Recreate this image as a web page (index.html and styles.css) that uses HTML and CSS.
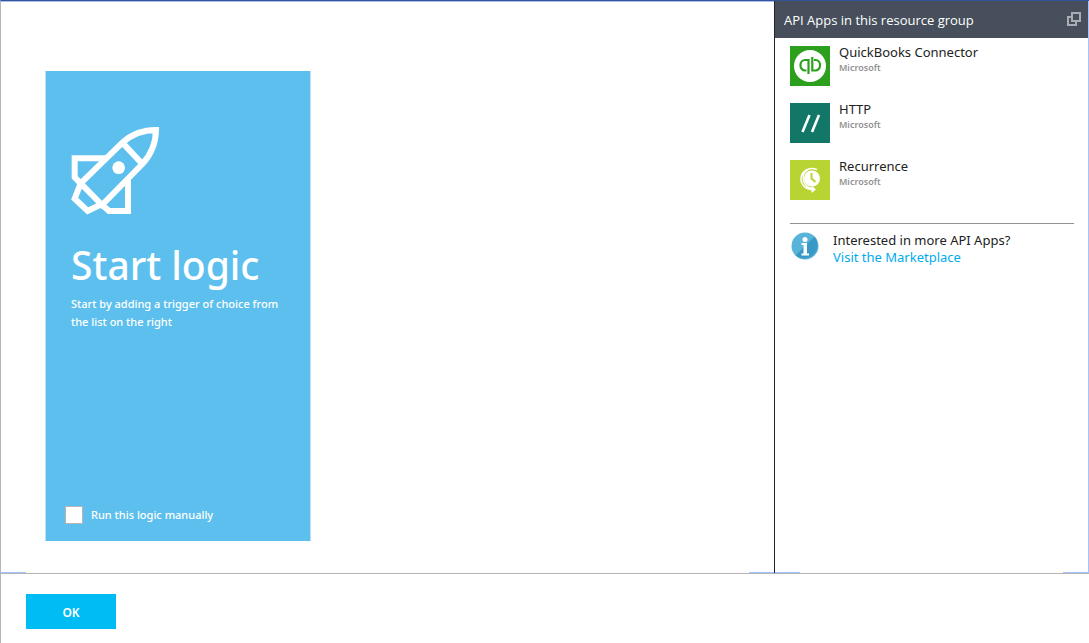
FILE: index.html
```html
<!DOCTYPE html>
<html lang="en">
<head>
<meta charset="utf-8">
<title>Start logic</title>
<link rel="stylesheet" href="styles.css">
</head>
<body>
<div class="blade">
  <div class="workspace">
    <main class="canvas">
      <section class="start-card">
        <svg class="rocket" viewBox="34 34 267 267" fill="none" stroke="#fff" stroke-width="18" aria-hidden="true">
          <path d="M63 206 L188 84 Q230 46 289 46 Q288 105 248 148 L127 271 Z"/>
          <path d="M188 84 L248 148"/>
          <path d="M138 131 H45 V188 L63 206 L45 252 L84 289 L127 268"/>
          <path d="M127 270 L148 289 H205 V194"/>
          <circle cx="177" cy="159" r="19" fill="#fff" stroke="none"/>
        </svg>
        <h1 class="start-title">Start logic</h1>
        <p class="start-text">Start by adding a trigger of choice from the list on the right</p>
        <label class="manual"><input class="manual-box" type="checkbox">Run this logic manually</label>
      </section>
    </main>
    <aside class="sidebar">
      <header class="sidebar-head">
        <h2 class="sidebar-title">API Apps in this resource group</h2>
        <button class="restore" type="button" aria-label="Restore">
          <svg class="restore-icon" viewBox="0 0 14 14" fill="none" stroke="#a9adb3" stroke-width="2" aria-hidden="true">
            <path d="M5 5H1V13H9V9M5 1H13V9H5Z"/>
          </svg>
        </button>
      </header>
      <ul class="apps">
        <li class="app">
          <svg class="app-icon" viewBox="0 0 40 40" aria-hidden="true">
            <path fill="#2ca01c" d="M0 0H40V40H0Z"/>
            <circle cx="20" cy="20" r="16" fill="#fff"/>
            <g fill="none" stroke="#2ca01c" stroke-width="2.200">
              <path d="M18.500 28V14H15A4.500 5.200 0 0 0 15 24.500H16.500"/>
              <path d="M22.300 11V24.500H25.500A4.500 5.200 0 0 0 25.500 14H24"/>
            </g>
          </svg>
          <div class="app-info"><span class="app-name">QuickBooks Connector</span><span class="app-maker">Microsoft</span></div>
        </li>
        <li class="app">
          <svg class="app-icon" viewBox="0 0 40 40" aria-hidden="true">
            <path fill="#127766" d="M0 0H40V40H0Z"/>
            <path fill="none" stroke="#fff" stroke-width="2.600" d="M12.500 29L19.500 12M22 29L29 12"/>
          </svg>
          <div class="app-info"><span class="app-name">HTTP</span><span class="app-maker">Microsoft</span></div>
        </li>
        <li class="app">
          <svg class="app-icon" viewBox="0 0 40 40" aria-hidden="true">
            <path fill="#b8d432" d="M0 0H40V40H0Z"/>
            <circle cx="22" cy="18.500" r="8" fill="#fff"/>
            <path fill="none" stroke="#b8d432" stroke-width="2" d="M21.500 13V18.500L25.500 22"/>
            <path fill="none" stroke="#fff" stroke-width="1.500" d="M27 9.500C18 6 11 12 11 19C11 25 16 29.500 22 29.500M19 9C10 13 12 27 22 28.500"/>
            <path fill="#fff" d="M21.500 25.500L26 29.500L21.500 33Z"/>
          </svg>
          <div class="app-info"><span class="app-name">Recurrence</span><span class="app-maker">Microsoft</span></div>
        </li>
      </ul>
      <div class="more">
        <svg class="info-icon" viewBox="0 0 28 28" aria-hidden="true">
          <circle cx="14" cy="14" r="13.500" fill="#59b4d9"/>
          <path fill="#3999c6" d="M23.500 4.500A13.500 13.500 0 0 1 4.500 23.500Z"/>
          <circle cx="14" cy="7.500" r="2.500" fill="#fff"/>
          <path fill="#fff" d="M10.500 11H16V21.500H18V23.500H10.500V21.500H12.500V13H10.500Z"/>
        </svg>
        <div class="more-info">Interested in more API Apps?<a class="more-link" href="#">Visit the Marketplace</a></div>
      </div>
    </aside>
  </div>
  <footer class="actions"><button class="ok" type="button">OK</button></footer>
</div>
</body>
</html>
```
FILE: styles.css
```css
* { box-sizing: border-box; }
body {
  margin: 0;
  background: #fff;
  color: #222;
  font-family: "Noto Sans", "Open Sans", sans-serif;
  font-size: 13px;
}
h1, h2, p, ul { margin: 0; padding: 0; font-weight: 400; }
.blade {
  display: flex;
  flex-direction: column;
  min-height: 100vh;
  border-top: 1px solid #34549a;
  border-left: 1px solid #b5b5b5;
}
.workspace { display: flex; flex: 1; border-bottom: 1px solid #b5b5b5; }
.canvas, .sidebar {
  background-image: linear-gradient(#a3c5ff, #a3c5ff), linear-gradient(#a3c5ff, #a3c5ff);
  background-repeat: no-repeat;
  background-size: 25px 1px;
  background-position: left bottom, right bottom;
}
.canvas { flex: 1; padding: 69px 44px 32px; border-top: 1px solid #a9bdf0; }
.start-card {
  display: flex;
  flex-direction: column;
  width: 266px;
  height: 100%;
  padding: 55px 20px 17px 25px;
  background: #5dbfed;
  border-left: 1px solid #b5e0f6;
  border-right: 1px solid #b5e0f6;
  color: #fff;
}
.rocket { width: 89px; height: 89px; flex: none; }
.start-title { margin-top: 20px; font-size: 39px; font-weight: 500; line-height: 60px; white-space: nowrap; }
.start-text, .manual { font-size: 11px; font-weight: 500; line-height: 18px; }
.manual { display: flex; align-items: center; gap: 8px; margin: auto 0 0 -6px; }
.manual-box { appearance: none; width: 18px; height: 18px; margin: 0; background: #fff; border: 1px solid #b5b5b5; }
.manual-box:checked { background: #00bcf5; }
.sidebar { width: 315px; border-left: 1px solid #222; border-right: 1px solid #a3c5ff; }
.sidebar-head {
  display: flex;
  align-items: center;
  justify-content: space-between;
  height: 37px;
  padding: 0 7px 0 9px;
  background: #464f5b;
  color: #fff;
}
.sidebar-title { font-family: "Open Sans", "Noto Sans", sans-serif; font-size: 13px; }
.restore { display: flex; padding: 0 0 2px; border: 0; background: none; }
.restore-icon { width: 14px; height: 14px; }
.apps { display: grid; gap: 17px; padding: 8px 15px 0; list-style: none; }
.app { display: flex; gap: 9px; }
.app-icon { width: 40px; height: 40px; flex: none; }
.app-info { display: flex; flex-direction: column; }
.app-name { font-size: 13px; line-height: 12px; }
.app-maker { font-size: 9px; font-weight: 600; line-height: 20px; color: #929292; }
.more { display: flex; gap: 14px; margin: 23px 14px 0 15px; padding-top: 8px; border-top: 1px solid #929292; }
.info-icon { width: 28px; height: 28px; margin-left: 1px; flex: none; }
.more-info { line-height: 17px; }
.more-link { display: block; color: #00abec; text-decoration: none; }
.actions { padding: 20px 25px 14px; }
.ok { display: block; width: 90px; height: 35px; padding: 2px 0 0; border: 0; background: #00bcf5; color: #fff; font: 600 12px "Noto Sans", sans-serif; }
```
